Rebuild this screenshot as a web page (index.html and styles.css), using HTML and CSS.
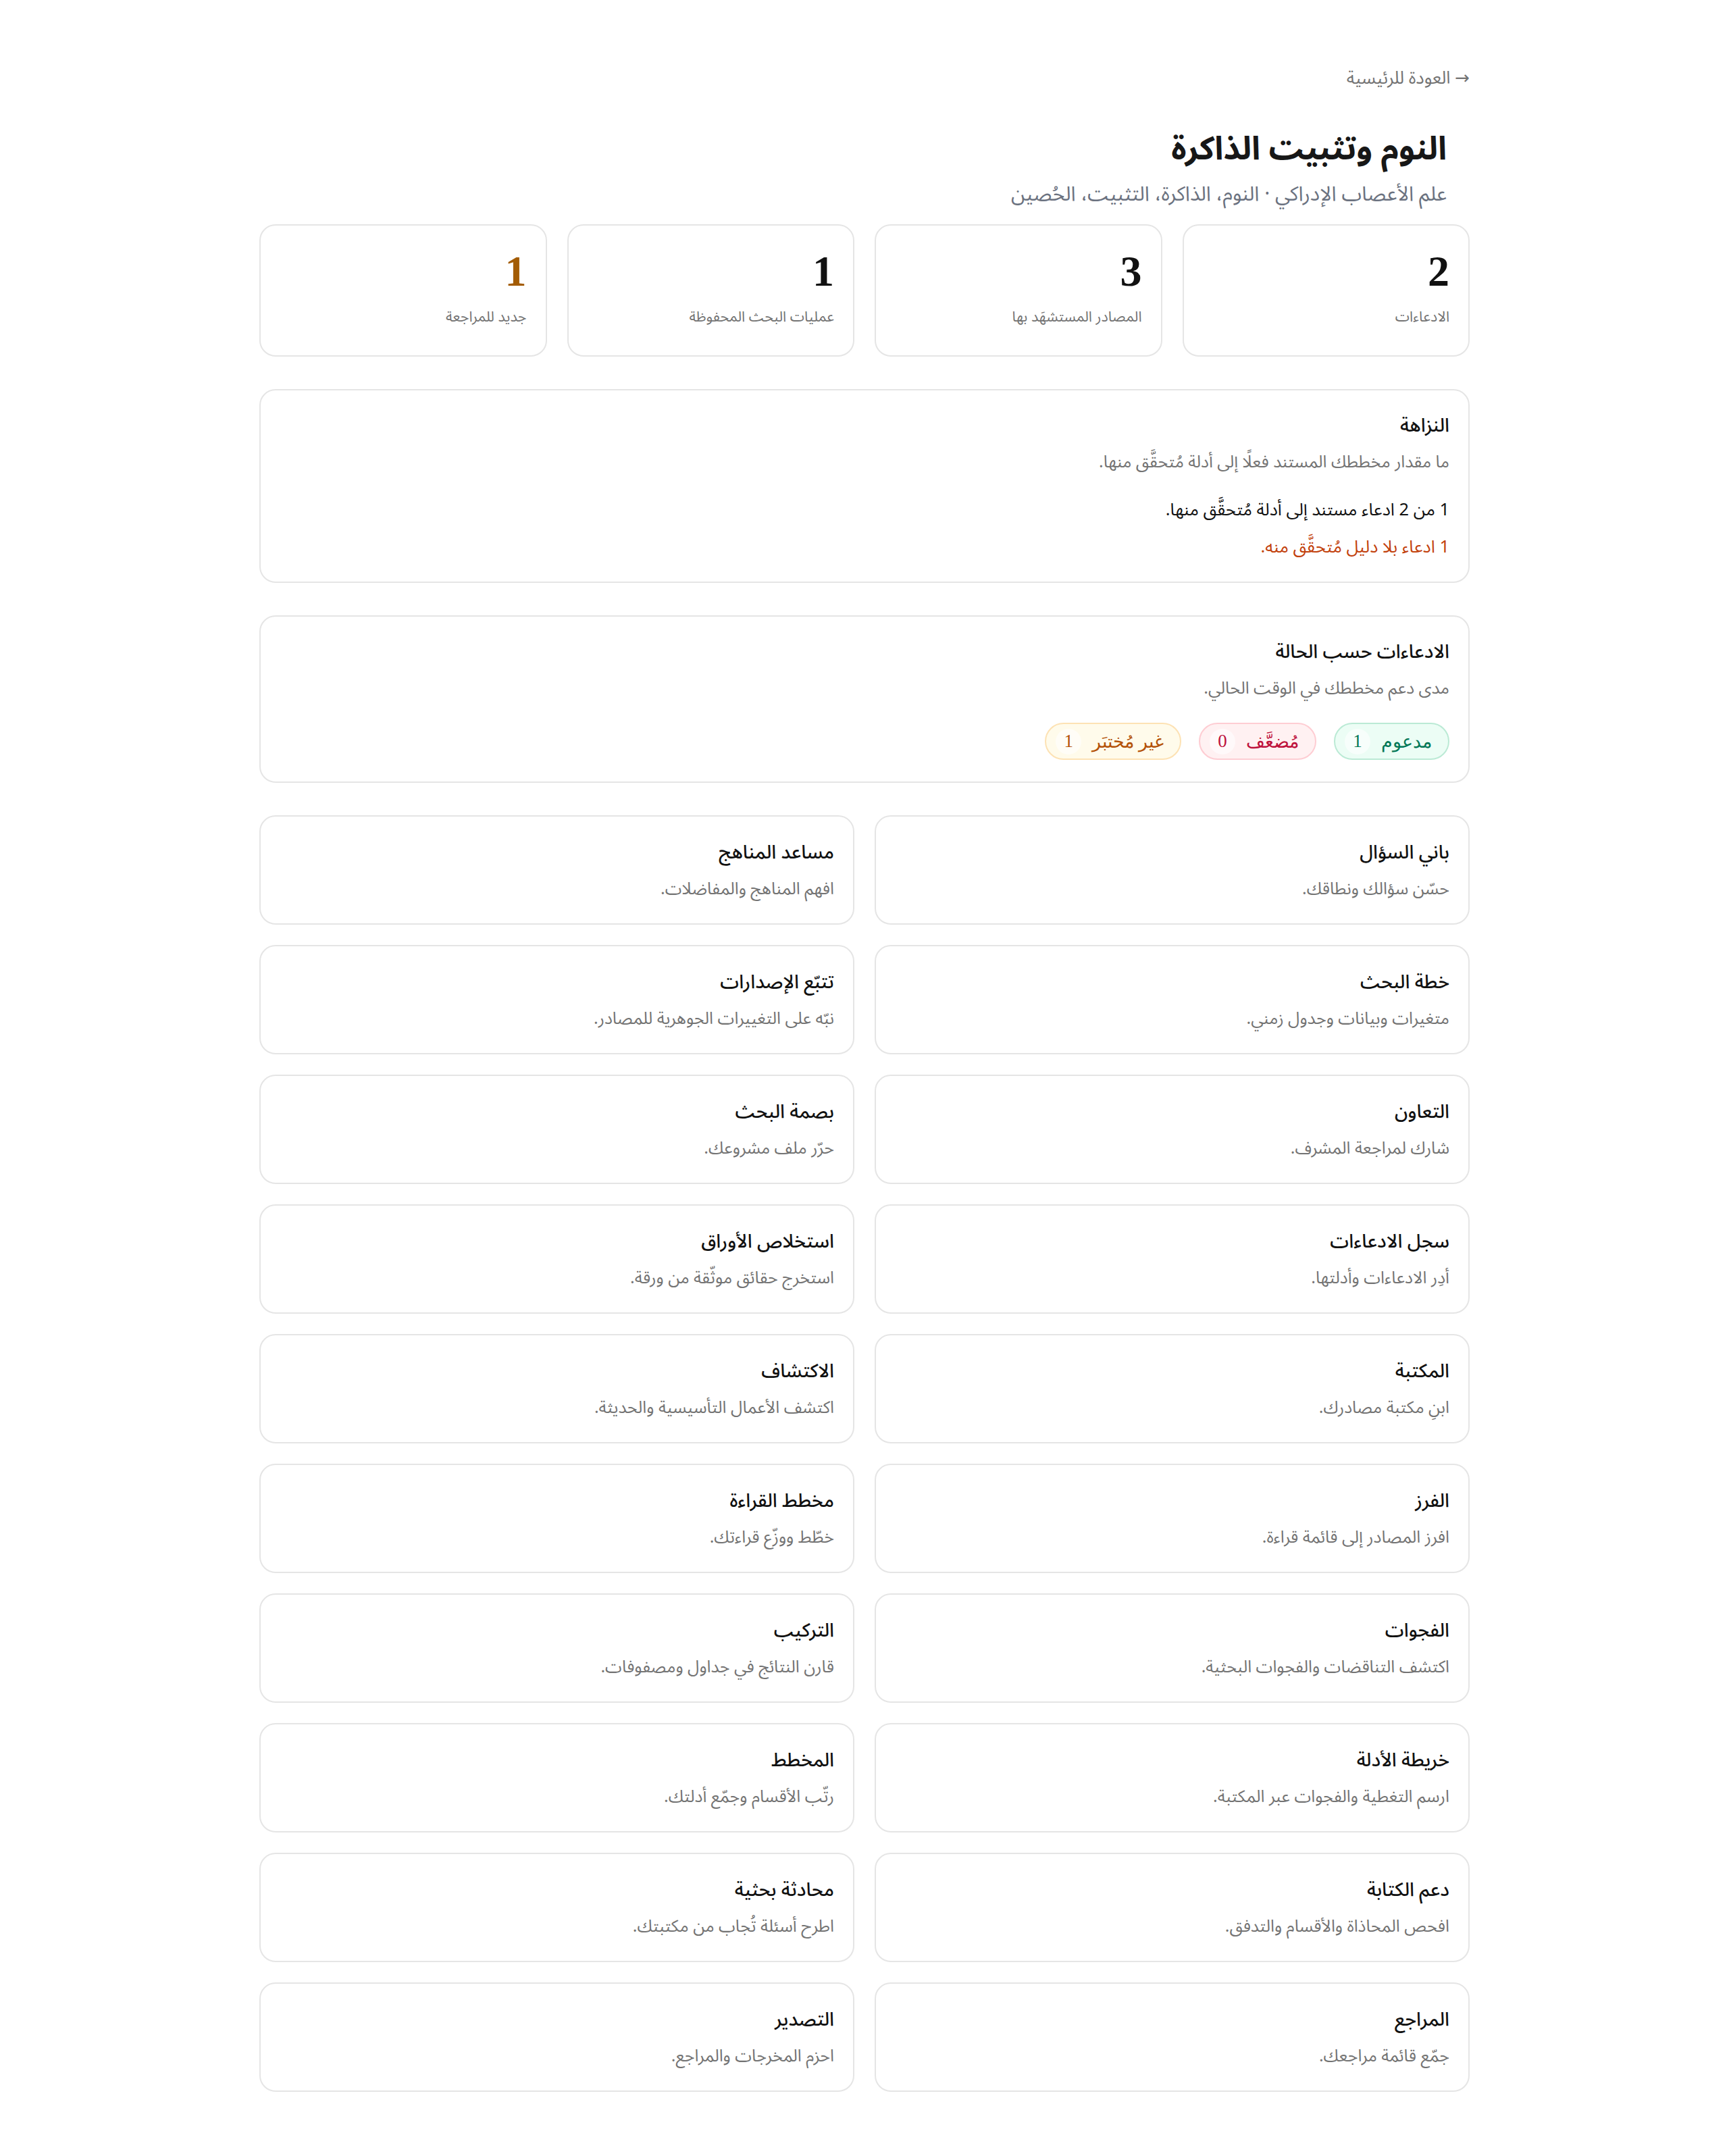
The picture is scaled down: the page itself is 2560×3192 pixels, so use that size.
FILE: index.html
```html
<!DOCTYPE html>
<html lang="ar" dir="rtl">
<head>
  <meta charset="UTF-8">
  <meta name="viewport" content="width=device-width, initial-scale=1.0">
  <title>النوم وتثبيت الذاكرة</title>
  <link rel="stylesheet" href="styles.css">
</head>
<body>
  <main class="project-page">
    <a href="#" class="back-link">→ العودة للرئيسية</a>

    <header class="project-header">
      <h1>النوم وتثبيت الذاكرة</h1>
      <p>علم الأعصاب الإدراكي · النوم، الذاكرة، التثبيت، الحُصين</p>
    </header>

    <!-- أرقام سريعة -->
    <section class="stats">
      <div class="stat-card">
        <div class="stat-value">2</div>
        <div class="stat-label">الادعاءات</div>
      </div>
      <div class="stat-card">
        <div class="stat-value">3</div>
        <div class="stat-label">المصادر المستشهَد بها</div>
      </div>
      <div class="stat-card">
        <div class="stat-value">1</div>
        <div class="stat-label">عمليات البحث المحفوظة</div>
      </div>
      <div class="stat-card">
        <div class="stat-value accent">1</div>
        <div class="stat-label">جديد للمراجعة</div>
      </div>
    </section>

    <!-- النزاهة -->
    <section class="panel">
      <h2>النزاهة</h2>
      <p class="panel-desc">ما مقدار مخططك المستند فعلًا إلى أدلة مُتحقَّق منها.</p>
      <p class="integrity-line">1 من 2 ادعاء مستند إلى أدلة مُتحقَّق منها.</p>
      <p class="integrity-warn">1 ادعاء بلا دليل مُتحقَّق منه.</p>
    </section>

    <!-- الادعاءات حسب الحالة -->
    <section class="panel">
      <h2>الادعاءات حسب الحالة</h2>
      <p class="panel-desc">مدى دعم مخططك في الوقت الحالي.</p>
      <div class="badges">
        <span class="badge supported">مدعوم <span class="count">1</span></span>
        <span class="badge weakened">مُضعَّف <span class="count">0</span></span>
        <span class="badge untested">غير مُختبَر <span class="count">1</span></span>
      </div>
    </section>

    <!-- الأدوات -->
    <section class="tools">
      <a href="#" class="tool-card"><h3>باني السؤال</h3><p>حسّن سؤالك ونطاقك.</p></a>
      <a href="#" class="tool-card"><h3>مساعد المناهج</h3><p>افهم المناهج والمفاضلات.</p></a>
      <a href="#" class="tool-card"><h3>خطة البحث</h3><p>متغيرات وبيانات وجدول زمني.</p></a>
      <a href="#" class="tool-card"><h3>تتبّع الإصدارات</h3><p>نبّه على التغييرات الجوهرية للمصادر.</p></a>
      <a href="#" class="tool-card"><h3>التعاون</h3><p>شارك لمراجعة المشرف.</p></a>
      <a href="#" class="tool-card"><h3>بصمة البحث</h3><p>حرّر ملف مشروعك.</p></a>
      <a href="#" class="tool-card"><h3>سجل الادعاءات</h3><p>أدِر الادعاءات وأدلتها.</p></a>
      <a href="#" class="tool-card"><h3>استخلاص الأوراق</h3><p>استخرج حقائق موثّقة من ورقة.</p></a>
      <a href="#" class="tool-card"><h3>المكتبة</h3><p>ابنِ مكتبة مصادرك.</p></a>
      <a href="#" class="tool-card"><h3>الاكتشاف</h3><p>اكتشف الأعمال التأسيسية والحديثة.</p></a>
      <a href="#" class="tool-card"><h3>الفرز</h3><p>افرز المصادر إلى قائمة قراءة.</p></a>
      <a href="#" class="tool-card"><h3>مخطط القراءة</h3><p>خطّط ووزّع قراءتك.</p></a>
      <a href="#" class="tool-card"><h3>الفجوات</h3><p>اكتشف التناقضات والفجوات البحثية.</p></a>
      <a href="#" class="tool-card"><h3>التركيب</h3><p>قارن النتائج في جداول ومصفوفات.</p></a>
      <a href="#" class="tool-card"><h3>خريطة الأدلة</h3><p>ارسم التغطية والفجوات عبر المكتبة.</p></a>
      <a href="#" class="tool-card"><h3>المخطط</h3><p>رتّب الأقسام وجمّع أدلتك.</p></a>
      <a href="#" class="tool-card"><h3>دعم الكتابة</h3><p>افحص المحاذاة والأقسام والتدفق.</p></a>
      <a href="#" class="tool-card"><h3>محادثة بحثية</h3><p>اطرح أسئلة تُجاب من مكتبتك.</p></a>
      <a href="#" class="tool-card"><h3>المراجع</h3><p>جمّع قائمة مراجعك.</p></a>
      <a href="#" class="tool-card"><h3>التصدير</h3><p>احزم المخرجات والمراجع.</p></a>
    </section>
  </main>
</body>
</html>
```

FILE: styles.css
```css
/* إعادة ضبط */
* {
  margin: 0;
  padding: 0;
  box-sizing: border-box;
}

body {
  font-family: "Noto Sans", "Noto Sans Arabic", "DejaVu Sans", sans-serif;
  background-color: #ffffff;
  color: #171717;
}

/* الحاوية الرئيسية */
.project-page {
  width: 1792px;
  margin: 0 auto;
  padding: 94px 0 96px;
  display: flex;
  flex-direction: column;
  gap: 48px;
}

/* رابط العودة */
.back-link {
  align-self: flex-start;
  font-size: 26px;
  line-height: 40px;
  color: #737373;
  text-decoration: none;
  margin-bottom: 6px;
}

/* رأس الصفحة */
.project-header {
  padding: 0 34px;
  margin-bottom: -24px;
}

.project-header h1 {
  font-size: 48px;
  line-height: 60px;
  font-weight: 700;
  color: #171717;
}

.project-header p {
  margin-top: 16px;
  font-size: 30px;
  line-height: 44px;
  color: #6b7280;
}

/* بطاقات الأرقام */
.stats {
  display: grid;
  grid-template-columns: repeat(4, 1fr);
  gap: 30px;
}

.stat-card {
  border: 2px solid #e5e5e5;
  border-radius: 24px;
  padding: 32px 28px 40px;
  height: 196px;
}

.stat-value {
  font-family: "Liberation Serif", serif;
  font-size: 64px;
  font-weight: 700;
  line-height: 72px;
  color: #111111;
}

.stat-value.accent {
  color: #a35c04;
}

.stat-label {
  margin-top: 12px;
  font-size: 21.5px;
  line-height: 36px;
  color: #737373;
}

/* اللوحات */
.panel {
  border: 2px solid #e5e5e5;
  border-radius: 24px;
  padding: 32px 28px 32px;
}

.panel h2 {
  font-size: 28px;
  line-height: 36px;
  font-weight: 500;
  color: #111111;
}

.panel-desc {
  margin-top: 16px;
  font-size: 25px;
  line-height: 40px;
  color: #737373;
}

.integrity-line {
  margin-top: 30px;
  font-size: 25.5px;
  line-height: 42px;
  color: #111111;
}

.integrity-warn {
  margin-top: 13px;
  font-size: 25.5px;
  line-height: 42px;
  color: #c2410c;
}

/* شارات الحالة */
.badges {
  margin-top: 33px;
  display: flex;
  gap: 26px;
}

.badge {
  display: inline-flex;
  align-items: center;
  gap: 16px;
  height: 55px;
  padding: 0 24px 0 14px;
  border: 2px solid;
  border-radius: 999px;
  font-family: "Liberation Serif", serif;
  font-size: 27px;
}

.badge .count {
  display: inline-flex;
  align-items: center;
  justify-content: center;
  min-width: 38px;
  height: 38px;
  border-radius: 999px;
  background-color: rgba(255, 255, 255, 0.6);
}

.badge.supported {
  background-color: #ecfdf5;
  border-color: #bbead5;
  color: #047857;
}

.badge.weakened {
  background-color: #fff1f2;
  border-color: #fecdd3;
  color: #be123c;
}

.badge.untested {
  background-color: #fffbeb;
  border-color: #fde2b4;
  color: #b45309;
}

/* شبكة الأدوات */
.tools {
  display: grid;
  grid-template-columns: 1fr 1fr;
  gap: 30px;
}

.tool-card {
  display: block;
  height: 162px;
  border: 2px solid #e5e5e5;
  border-radius: 24px;
  padding: 33px 28px 32px;
  text-decoration: none;
}

.tool-card h3 {
  font-size: 28px;
  line-height: 36px;
  font-weight: 500;
  color: #111111;
}

.tool-card p {
  margin-top: 16px;
  font-size: 25px;
  line-height: 40px;
  color: #737373;
}
```
